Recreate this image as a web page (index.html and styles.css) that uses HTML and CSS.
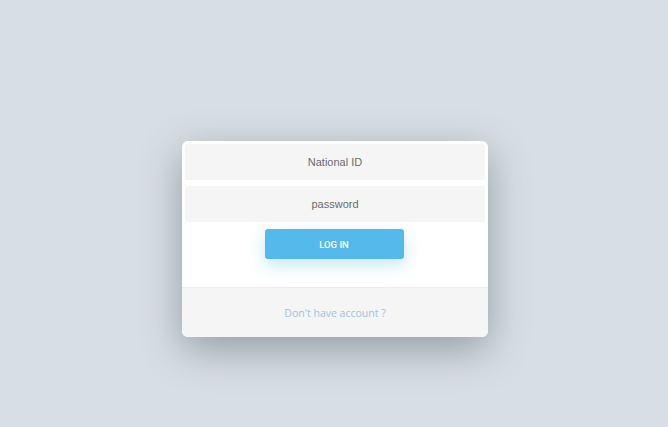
FILE: index.html
```html
<!DOCTYPE html>
<html>
<head>
<meta charset="utf-8">
<link rel="stylesheet" href="styles.css">
</head>
<body>
<div class="page">
  <div class="card">
    <div class="form">
      <div class="field">National ID</div>
      <div class="field">password</div>
      <button class="login">LOG IN</button>
    </div>
    <div class="footer">Don't have account ?</div>
  </div>
</div>
</body>
</html>
```

FILE: styles.css
```css
html, body { margin: 0; padding: 0; }
body { background: #d8dfe4; width: 668px; height: 427px; overflow: hidden; }
.page { height: 427px; display: flex; justify-content: center; padding-top: 141px; box-sizing: border-box; padding-left: 2px; }
.card {
  width: 306px; height: 196px; background: #fff; border-radius: 6px;
  box-shadow: 0 12px 40px rgba(60,75,85,0.45);
  overflow: hidden; display: flex; flex-direction: column;
}
.form { padding: 3px 3px 0; display: flex; flex-direction: column; gap: 6px; height: 146px; box-sizing: border-box; }
.field {
  height: 36px; background: #f5f5f5; border-radius: 3px;
  display: flex; align-items: center; justify-content: center;
  font-family: "Liberation Sans", Arial, sans-serif; font-size: 11px; color: #6b6b6b;
}
.login {
  align-self: center; width: 139px; height: 30px; margin-top: 1px; margin-right: 2px;
  border: none; border-radius: 3px; background: #56b9ec; color: #fff;
  font-family: Roboto, "Liberation Sans", sans-serif; font-size: 9.5px; font-weight: 500;
  box-shadow: 0 6px 16px rgba(86,185,236,0.35);
}
.footer {
  flex: 1; background: #f5f5f5; border-top: 1px solid #e8eef3;
  display: flex; align-items: center; justify-content: center;
  font-family: "Open Sans", sans-serif; font-size: 10.5px; color: #a3c1df;
}
```
